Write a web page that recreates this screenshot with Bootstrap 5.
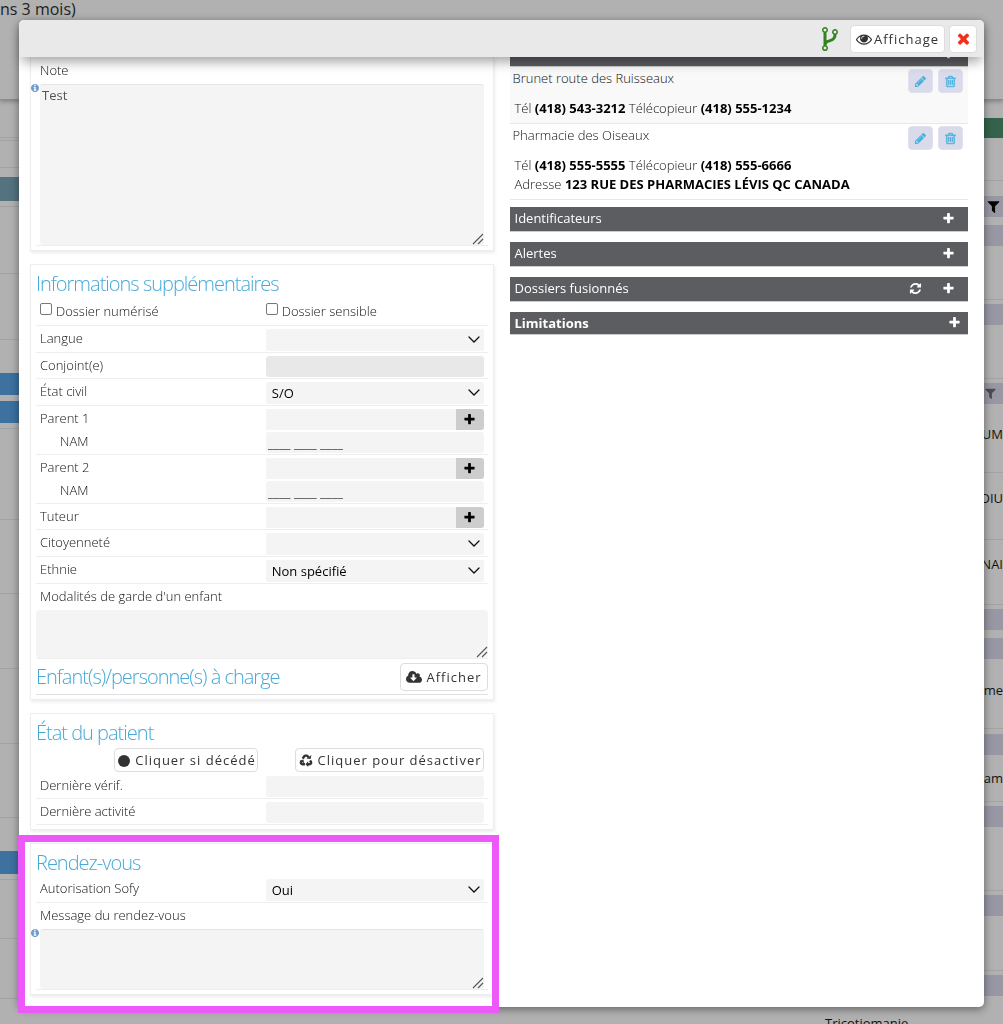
<!DOCTYPE html>
<html lang="fr">
<head>
<meta charset="utf-8">
<meta name="viewport" content="width=device-width, initial-scale=1">
<title>Dossier patient</title>
<link href="https://cdn.jsdelivr.net/npm/bootstrap@5.3.0/dist/css/bootstrap.min.css" rel="stylesheet">
<style>
body{font-family:"Open Sans","Noto Sans",sans-serif;font-size:13px;font-weight:300;line-height:20px;color:#111;background:#b1b1b1;overflow:hidden;height:100vh}
.ic{fill:currentColor;display:block;flex:none}

/* dimmed page behind the dialog */
.page-top{height:100px;border-bottom:1px solid #8c8c8c;box-shadow:0 2px 4px rgba(0,0,0,.25);font-size:16px;font-weight:400;line-height:18px;color:#222;white-space:nowrap}
.side-l{width:19px}
.side-r{width:19px;font-weight:400;color:#111;white-space:nowrap}
.seg{border-bottom:1px solid #a3a3a3;display:flex;flex-direction:column;justify-content:center;align-items:flex-end}
.seg-plain{border-bottom:0}
.fill-teal{background:#54727f}.fill-blue{background:#3c71a0}.fill-green{background:#34624a}
.fill-mauve{background:#9798a4;color:#000;display:flex;align-items:center;justify-content:center;height:21px}
.fill-mauve.dim{color:#4c4c52}
.page-foot{left:825px;top:1013px;font-weight:400;color:#111}

/* dialog */
.modal-dialog{max-width:none;margin:20px 19px 17px}
.modal-content{border:0;border-radius:5px;min-height:calc(100vh - 37px);box-shadow:0 2px 8px rgba(0,0,0,.45);color:#111}
.modal-header{height:37px;padding:0 7px 0 0;border:0;border-radius:5px 5px 0 0;background:#e9e9e9;box-shadow:0 8px 12px -3px rgba(0,0,0,.35);position:relative;z-index:2;color:#333}
.branch{color:#31831f}
.tool{height:28px;border:1px solid #ddd;border-radius:4px;background:#fff;color:#333;font-size:13px;line-height:20px;font-weight:400;letter-spacing:1px;padding:0 5px;display:inline-flex;align-items:center;white-space:nowrap}
.tool-view{gap:2px}
.tool-close{color:#f0301c;width:28px;justify-content:center}
.tool-low{height:24px;padding:0 1px 0 3px}
.col-left{padding:0 8px 0 11px}
.col-right{padding:0 16px 0 8px}

.panel{border:1px solid #eee;box-shadow:1px 2px 3px rgba(0,0,0,.08);padding:5px 5px 4px;margin-bottom:13px;background:#fff;position:relative}
.panel-cut{border-top:0;padding-top:3px}
.panel h2{font-size:20px;line-height:27px;font-weight:300;letter-spacing:-1px;color:#45aad8;margin:0}
.line{border-bottom:1px solid #eee;display:flex}
.line>*{width:50%;padding:0 4px}
.line>.whole{width:100%}
.line label,.cap{line-height:20px;padding-top:2px}
.line .ticks{height:28px;display:flex;align-items:center}
.line .acts{padding-top:2px;padding-bottom:1px;text-align:right}
.cap{display:flex;flex-direction:column;gap:1px}
.sub{padding-left:20px}
.line>.fields{padding-top:3px;padding-bottom:1px;display:flex;flex-direction:column;gap:2px}
.form-control,.form-select{border:0;border-radius:3px;background-color:#f4f4f4;font-size:13px;line-height:20px;height:21px;min-height:0;padding:0 2px;color:#000}
.form-control:disabled{background:#e8e8e8}
.form-select{height:22px;padding:0 24px 0 6px;background-image:url("data:image/svg+xml,%3Csvg xmlns='http://www.w3.org/2000/svg' viewBox='0 0 12 8'%3E%3Cpath d='M1 1l5 5 5-5' fill='none' stroke='%23111' stroke-width='1.3' stroke-linecap='round'/%3E%3C/svg%3E");background-size:12px 8px;background-position:right 4px center}
.nam{color:#444;font-weight:400}
.add{border:0;background:#cdcdcd;color:#000;width:28px;flex:none;display:flex;align-items:center;justify-content:center;border-radius:0 3px 3px 0}
textarea.form-control{resize:none;color:#555;font-weight:400;padding:0 2px;height:auto;background-image:url("data:image/svg+xml,%3Csvg xmlns='http://www.w3.org/2000/svg' viewBox='0 0 12 12'%3E%3Cpath d='M1 11L11 1M6 11l5-5' stroke='%23555' stroke-width='1.1'/%3E%3C/svg%3E");background-repeat:no-repeat;background-size:12px 12px;background-position:right 0 bottom 0}
textarea.area-note,textarea.area-msg{border-top:1px solid #e4e4e4;display:block}
textarea.area-note{height:161px}
textarea.area-msg{height:60px}
textarea.area-mod{height:48px}
.hint{position:absolute;left:-9px;top:0;color:#6f9ccb}
.tick{appearance:none;width:12px;height:12px;border:1px solid #777;border-radius:2px;background:#fff;margin:0 4px 0 0}
.marked::after{content:"";position:absolute;inset:-9px -6px -19px -13px;border:7px solid #ed58f8;pointer-events:none}

.bar{background:#5c5d61;color:#fff;border-bottom:1px solid #ccc;height:25px;font-weight:400;display:flex;align-items:center;justify-content:space-between;padding:0 13px 2px 5px;margin-bottom:10px}
.bar h3{font-size:13px;line-height:20px;font-weight:400;margin:0}
.bar-top{margin:-15px 0 0}
.bar-last{height:23px;padding:0 7px 1px 5px}
.bar-last h3{font-weight:700}
.bar button{border:0;background:none;color:inherit;padding:0}
.place{border-bottom:1px solid #e8e8e8;padding-bottom:5px;line-height:19px}
.place-alt{background:#f9f9f9}
.place-last{margin-bottom:7px}
.place-head{height:32px;padding:2px 5px 0 3px;display:flex;gap:5px}
.place-text{padding-left:5px}
.place b{color:#000;font-weight:700}
.mini{width:25px;height:24px;border:1px solid #e0e0ee;border-radius:4px;background:#dadbea;color:#49b0de;display:flex;align-items:center;justify-content:center;padding:0}
</style>
</head>
<body>
<svg class="d-none">
<symbol id="plus" viewBox="0 0 1792 1792"><path d="M1600 736v192q0 40-28 68t-68 28h-416v416q0 40-28 68t-68 28h-192q-40 0-68-28t-28-68v-416h-416q-40 0-68-28t-28-68v-192q0-40 28-68t68-28h416v-416q0-40 28-68t68-28h192q40 0 68 28t28 68v416h416q40 0 68 28t28 68z"/></symbol>
<symbol id="times" viewBox="0 0 1792 1792"><path d="M1490 1322q0 40-28 68l-136 136q-28 28-68 28t-68-28l-294-294-294 294q-28 28-68 28t-68-28l-136-136q-28-28-28-68t28-68l294-294-294-294q-28-28-28-68t28-68l136-136q28-28 68-28t68 28l294 294 294-294q28-28 68-28t68 28l136 136q28 28 28 68t-28 68l-294 294 294 294q28 28 28 68z"/></symbol>
<symbol id="eye" viewBox="0 0 1792 1792"><path d="M1664 960q-152-236-381-353 61 104 61 225 0 185-131.5 316.5t-316.5 131.5-316.5-131.5-131.5-316.5q0-121 61-225-229 117-381 353 133 205 333.5 326.5t434.5 121.5 434.5-121.5 333.5-326.5zm-720-384q0-20-14-34t-34-14q-125 0-214.5 89.5t-89.5 214.5q0 20 14 34t34 14 34-14 14-34q0-86 61-147t147-61q20 0 34-14t14-34zm848 384q0 34-20 69-140 230-376.5 368.5t-499.5 138.5-499.5-139-376.5-368q-20-35-20-69t20-69q140-229 376.5-368t499.5-139 499.5 139 376.5 368q20 35 20 69z"/></symbol>
<symbol id="fork" viewBox="384 128 1024 1536"><path d="M672 1472q0-40-28-68t-68-28-68 28-28 68 28 68 68 28 68-28 28-68zm0-1152q0-40-28-68t-68-28-68 28-28 68 28 68 68 28 68-28 28-68zm640 128q0-40-28-68t-68-28-68 28-28 68 28 68 68 28 68-28 28-68zm96 0q0 52-26 96.5t-70 69.5q-2 287-226 414-67 38-203 81-128 40-169.5 71t-41.5 100v26q44 25 70 69.5t26 96.5q0 80-56 136t-136 56-136-56-56-136q0-52 26-96.5t70-69.5v-820q-44-25-70-69.5t-26-96.5q0-80 56-136t136-56 136 56 56 136q0 52-26 96.5t-70 69.5v497q54-26 154-57 55-17 87.5-29.5t70.5-31 59-39.5 40.5-51 28-69.5 8.500-91.500q-44-25-70-69.500t-26-96.500q0-80 56-136t136-56 136 56 56 136z"/></symbol>
<symbol id="pencil" viewBox="0 0 1792 1792"><path d="M491 1536l91-91-235-235-91 91v107h128v128h107zm523-928q0-22-22-22-10 0-17 7l-542 542q-7 7-7 17 0 22 22 22 10 0 17-7l542-542q7-7 7-17zm-54-192l416 416-832 832h-416v-416zm683 96q0 53-37 90l-166 166-416-416 166-165q36-38 90-38 53 0 91 38l235 234q37 39 37 91z"/></symbol>
<symbol id="trash" viewBox="0 0 1792 1792"><path stroke="currentColor" stroke-width="50" d="M704 736v576q0 14-9 23t-23 9h-64q-14 0-23-9t-9-23v-576q0-14 9-23t23-9h64q14 0 23 9t9 23zm256 0v576q0 14-9 23t-23 9h-64q-14 0-23-9t-9-23v-576q0-14 9-23t23-9h64q14 0 23 9t9 23zm256 0v576q0 14-9 23t-23 9h-64q-14 0-23-9t-9-23v-576q0-14 9-23t23-9h64q14 0 23 9t9 23zm128 724v-948h-896v948q0 22 7 40.5t14.5 27 10.5 8.5h832q3 0 10.5-8.5t14.5-27 7-40.5zm-672-1076h448l-48-117q-7-9-17-11h-317q-10 2-17 11zm928 32v64q0 14-9 23t-23 9h-96v948q0 83-47 143.5t-113 60.5h-832q-66 0-113-58.5t-47-141.5v-952h-96q-14 0-23-9t-9-23v-64q0-14 9-23t23-9h309l70-167q15-37 54-63t79-26h320q40 0 79 26t54 63l70 167h309q14 0 23 9t9 23z"/></symbol>
<symbol id="refresh" viewBox="0 0 1792 1792"><path d="M1639 1056q0 5-1 7-64 268-268 434.5t-478 166.5q-146 0-282.5-55t-243.5-157l-129 129q-19 19-45 19t-45-19-19-45v-448q0-26 19-45t45-19h448q26 0 45 19t19 45-19 45l-137 137q71 66 161 102t187 36q134 0 250-65t186-179q11-17 53-117 8-23 30-23h192q13 0 22.5 9.5t9.5 22.5zm25-800v448q0 26-19 45t-45 19h-448q-26 0-45-19t-19-45 19-45l138-138q-148-137-349-137-134 0-250 65t-186 179q-11 17-53 117-8 23-30 23h-199q-13 0-22.5-9.5t-9.5-22.5v-7q65-268 270-434.5t480-166.5q146 0 284 55.5t245 156.5l130-129q19-19 45-19t45 19 19 45z"/></symbol>
<symbol id="filter" viewBox="0 0 1792 1792"><path d="M1595 295q17 41-14 70l-493 493v742q0 42-39 59-13 5-25 5-27 0-45-19l-256-256q-19-19-19-45v-486l-493-493q-31-29-14-70 17-39 59-39h1280q42 0 59 39z"/></symbol>
<symbol id="cloud" viewBox="-64 0 1920 1792"><path d="M1216 928q0-14-9-23t-23-9h-224v-352q0-13-9.5-22.5t-22.5-9.5h-192q-13 0-22.5 9.5t-9.5 22.5v352h-224q-13 0-22.5 9.5t-9.5 22.5q0 14 9 23l352 352q9 9 23 9t23-9l351-351q10-12 10-24zm640 224q0 159-112.5 271.5t-271.5 112.5h-1088q-185 0-316.5-131.5t-131.5-316.5q0-130 70-240t188-165q-2-30-2-43 0-212 150-362t362-150q156 0 285.5 87t188.5 231q71-62 166-62 106 0 181 75t75 181q0 76-41 138 130 31 213.5 135.5t83.5 238.5z"/></symbol>
<symbol id="info" viewBox="128 128 1536 1536"><path d="M1152 1376v-160q0-14-9-23t-23-9h-96v-512q0-14-9-23t-23-9h-320q-14 0-23 9t-9 23v160q0 14 9 23t23 9h96v320h-96q-14 0-23 9t-9 23v160q0 14 9 23t23 9h448q14 0 23-9t9-23zm-128-896v-160q0-14-9-23t-23-9h-192q-14 0-23 9t-9 23v160q0 14 9 23t23 9h192q14 0 23-9t9-23zm640 416q0 209-103 385.5t-279.5 279.5-385.5 103-385.5-103-279.5-279.5-103-385.5 103-385.5 279.5-279.5 385.5-103 385.5 103 279.5 279.5 103 385.5z"/></symbol>
<symbol id="recycle" viewBox="0 0 24 24"><g fill="none" stroke="currentColor" stroke-width="4.500"><path d="M6 8.500l2.500-4q.8-1.500 2.500-1.500h2q1.500 0 2.300 1.400l1 1.600"/><path d="M19.500 12l1.600 2.500q.8 1.500 0 3t-2.600 1.500h-3"/><path d="M10 19h-4.500q-1.700 0-2.600-1.500t0-3l.8-1.500"/></g><path d="M13 8.500l7.500.5 1.500-7zM16 13.500v10.500l-5-5zM.2 12.500l6.800-2.500 2 7z"/></symbol>
</svg>

<div class="page-top">ns 3 mois)</div>
<div class="d-flex justify-content-between">
  <div class="side-l">
    <div class="seg" style="height:38px"></div><div class="seg" style="height:3px"></div><div class="seg" style="height:27px"></div>
    <div class="seg seg-plain" style="height:9px"></div><div class="fill-teal" style="height:24px"></div><div class="seg" style="height:6px"></div>
    <div class="seg" style="height:67px"></div><div class="seg" style="height:66px"></div><div class="seg seg-plain" style="height:33px"></div>
    <div class="fill-blue" style="height:22px"></div><div class="seg seg-plain" style="height:6px"></div><div class="fill-blue" style="height:22px"></div><div class="seg" style="height:6px"></div>
    <div class="seg" style="height:91px"></div><div class="seg" style="height:74px"></div><div class="seg" style="height:75px"></div><div class="seg" style="height:75px"></div><div class="seg" style="height:74px"></div>
    <div class="seg seg-plain" style="height:33px"></div><div class="fill-blue" style="height:23px"></div><div class="seg" style="height:6px"></div><div class="seg" style="height:59px"></div><div class="seg" style="height:60px"></div>
  </div>
  <div class="side-r">
    <div class="seg seg-plain" style="height:18px"></div><div class="fill-green" style="height:20px"></div><div class="seg" style="height:43px"></div>
    <div class="seg seg-plain" style="height:15px"></div><div class="fill-mauve"><svg class="ic" width="15" height="15"><use href="#filter"/></svg></div>
    <div class="seg seg-plain" style="height:8px"></div><div class="fill-mauve"></div><div class="seg" style="height:54px"></div>
    <div class="seg seg-plain" style="height:4px"></div><div class="fill-mauve"></div><div class="seg" style="height:54px"></div>
    <div class="seg seg-plain" style="height:4px"></div><div class="fill-mauve dim justify-content-start"><svg class="ic" width="13" height="13"><use href="#filter"/></svg></div>
    <div class="seg pb-2" style="height:69px">UM</div><div class="seg pb-3" style="height:67px">ODIU</div><div class="seg pb-3" style="height:65px">NAI</div>
    <div class="seg seg-plain" style="height:4px"></div><div class="fill-mauve"></div><div class="seg seg-plain" style="height:8px"></div><div class="fill-mauve"></div>
    <div class="seg pb-2" style="height:70px">me</div>
    <div class="seg seg-plain" style="height:5px"></div><div class="fill-mauve"></div><div class="seg" style="height:47px">am</div>
    <div class="seg seg-plain" style="height:4px"></div><div class="fill-mauve"></div><div class="seg" style="height:64px"></div>
    <div class="seg seg-plain" style="height:4px"></div><div class="fill-mauve"></div><div class="seg" style="height:55px"></div>
    <div class="seg seg-plain" style="height:4px"></div><div class="fill-mauve"></div>
  </div>
</div>
<div class="page-foot position-absolute">Tricotiomanie</div>

<div class="modal d-block overflow-hidden" role="dialog" aria-label="Patient">
<div class="modal-dialog">
<div class="modal-content">
  <div class="modal-header justify-content-end">
    <svg class="ic branch me-2" width="24" height="24"><use href="#fork"/></svg>
    <button type="button" class="tool tool-view me-1"><svg class="ic" width="16" height="16"><use href="#eye"/></svg>Affichage</button>
    <button type="button" class="tool tool-close" aria-label="Fermer"><svg class="ic" width="17" height="17"><use href="#times"/></svg></button>
  </div>
  <div class="row g-0">
    <div class="col-6 col-left">
      <section class="panel panel-cut">
        <div class="line"><div class="whole">
          <label for="note" class="d-block pt-0 pb-1">Note</label>
          <div class="position-relative"><svg class="ic hint" width="8" height="8"><use href="#info"/></svg><textarea id="note" class="form-control area-note">Test</textarea></div>
        </div></div>
      </section>

      <section class="panel">
        <h2>Informations supplémentaires</h2>
        <div class="line">
          <div class="ticks"><input class="tick mb-1" type="checkbox" id="num"><label for="num" class="p-0">Dossier numérisé</label></div>
          <div class="ticks"><input class="tick mb-1" type="checkbox" id="sens"><label for="sens" class="p-0">Dossier sensible</label></div>
        </div>
        <div class="line"><label for="langue">Langue</label><div class="fields"><select id="langue" class="form-select"><option></option></select></div></div>
        <div class="line"><label for="conj">Conjoint(e)</label><div class="fields"><input id="conj" class="form-control" disabled></div></div>
        <div class="line"><label for="civil">État civil</label><div class="fields"><select id="civil" class="form-select"><option>S/O</option></select></div></div>
        <div class="line"><div class="cap"><label for="p1" class="p-0">Parent 1</label><label for="n1" class="sub">NAM</label></div>
          <div class="fields"><div class="d-flex"><input id="p1" class="form-control rounded-0"><button type="button" class="add" aria-label="Ajouter"><svg class="ic" width="13" height="13"><use href="#plus"/></svg></button></div><input id="n1" class="form-control nam" value="____ ____ ____"></div></div>
        <div class="line"><div class="cap"><label for="p2" class="p-0">Parent 2</label><label for="n2" class="sub">NAM</label></div>
          <div class="fields"><div class="d-flex"><input id="p2" class="form-control rounded-0"><button type="button" class="add" aria-label="Ajouter"><svg class="ic" width="13" height="13"><use href="#plus"/></svg></button></div><input id="n2" class="form-control nam" value="____ ____ ____"></div></div>
        <div class="line"><label for="tut">Tuteur</label><div class="fields"><div class="d-flex"><input id="tut" class="form-control rounded-0"><button type="button" class="add" aria-label="Ajouter"><svg class="ic" width="13" height="13"><use href="#plus"/></svg></button></div></div></div>
        <div class="line"><label for="cit">Citoyenneté</label><div class="fields"><select id="cit" class="form-select"><option></option></select></div></div>
        <div class="line"><label for="eth">Ethnie</label><div class="fields"><select id="eth" class="form-select"><option>Non spécifié</option></select></div></div>
        <div class="line flex-column"><label for="mod" class="whole pb-1">Modalités de garde d'un enfant</label><textarea id="mod" class="form-control area-mod whole"></textarea></div>
        <div class="d-flex justify-content-between border-bottom" style="height:36px"><h2 class="pt-1">Enfant(s)/personne(s) à charge</h2>
          <button type="button" class="tool mt-1"><svg class="ic me-1" width="16" height="15"><use href="#cloud"/></svg>Afficher</button></div>
      </section>

      <section class="panel">
        <h2>État du patient</h2>
        <div class="line border-0">
          <div class="acts"><button type="button" class="tool tool-low"><svg class="ic me-1" width="13" height="13" viewBox="0 0 13 13"><circle cx="6" cy="7" r="6"/></svg>Cliquer si décédé</button></div>
          <div class="acts"><button type="button" class="tool tool-low"><svg class="ic me-1" width="14" height="13"><use href="#recycle"/></svg>Cliquer pour désactiver</button></div>
        </div>
        <div class="line"><label for="verif">Dernière vérif.</label><div class="fields"><input id="verif" class="form-control"></div></div>
        <div class="line"><label for="act">Dernière activité</label><div class="fields"><input id="act" class="form-control"></div></div>
      </section>

      <section class="panel marked mb-0">
        <h2>Rendez-vous</h2>
        <div class="line"><label for="sofy">Autorisation Sofy</label><div class="fields"><select id="sofy" class="form-select"><option>Oui</option></select></div></div>
        <div class="line"><div class="whole"><label for="msg" class="d-block pb-1">Message du rendez-vous</label>
          <div class="position-relative"><svg class="ic hint" width="8" height="8"><use href="#info"/></svg><textarea id="msg" class="form-control area-msg"></textarea></div></div></div>
      </section>
    </div>

    <div class="col-6 col-right">
      <div class="bar bar-top justify-content-end"><button type="button" aria-label="Ajouter"><svg class="ic" width="13" height="13"><use href="#plus"/></svg></button></div>
      <div class="place place-alt">
        <div class="place-head"><span class="me-auto">Brunet route des Ruisseaux</span><button type="button" class="mini" aria-label="Modifier"><svg class="ic" width="13" height="13"><use href="#pencil"/></svg></button><button type="button" class="mini" aria-label="Supprimer"><svg class="ic" width="13" height="13"><use href="#trash"/></svg></button></div>
        <div class="place-text">Tél <b>(418) 543-3212</b> Télécopieur <b>(418) 555-1234</b></div>
      </div>
      <div class="place place-last">
        <div class="place-head"><span class="me-auto">Pharmacie des Oiseaux</span><button type="button" class="mini" aria-label="Modifier"><svg class="ic" width="13" height="13"><use href="#pencil"/></svg></button><button type="button" class="mini" aria-label="Supprimer"><svg class="ic" width="13" height="13"><use href="#trash"/></svg></button></div>
        <div class="place-text">Tél <b>(418) 555-5555</b> Télécopieur <b>(418) 555-6666</b><br>Adresse <b>123 RUE DES PHARMACIES LÉVIS QC CANADA</b></div>
      </div>
      <div class="bar"><h3>Identificateurs</h3><button type="button" aria-label="Ajouter"><svg class="ic" width="13" height="13"><use href="#plus"/></svg></button></div>
      <div class="bar"><h3>Alertes</h3><button type="button" aria-label="Ajouter"><svg class="ic" width="13" height="13"><use href="#plus"/></svg></button></div>
      <div class="bar"><h3 class="me-auto">Dossiers fusionnés</h3><button type="button" class="me-3" aria-label="Actualiser"><svg class="ic me-1" width="13" height="13"><use href="#refresh"/></svg></button><button type="button" aria-label="Ajouter"><svg class="ic" width="13" height="13"><use href="#plus"/></svg></button></div>
      <div class="bar bar-last"><h3>Limitations</h3><button type="button" aria-label="Ajouter"><svg class="ic" width="13" height="13"><use href="#plus"/></svg></button></div>
    </div>
  </div>
</div>
</div>
</div>
<script src="https://cdn.jsdelivr.net/npm/bootstrap@5.3.0/dist/js/bootstrap.bundle.min.js"></script>
</body>
</html>
